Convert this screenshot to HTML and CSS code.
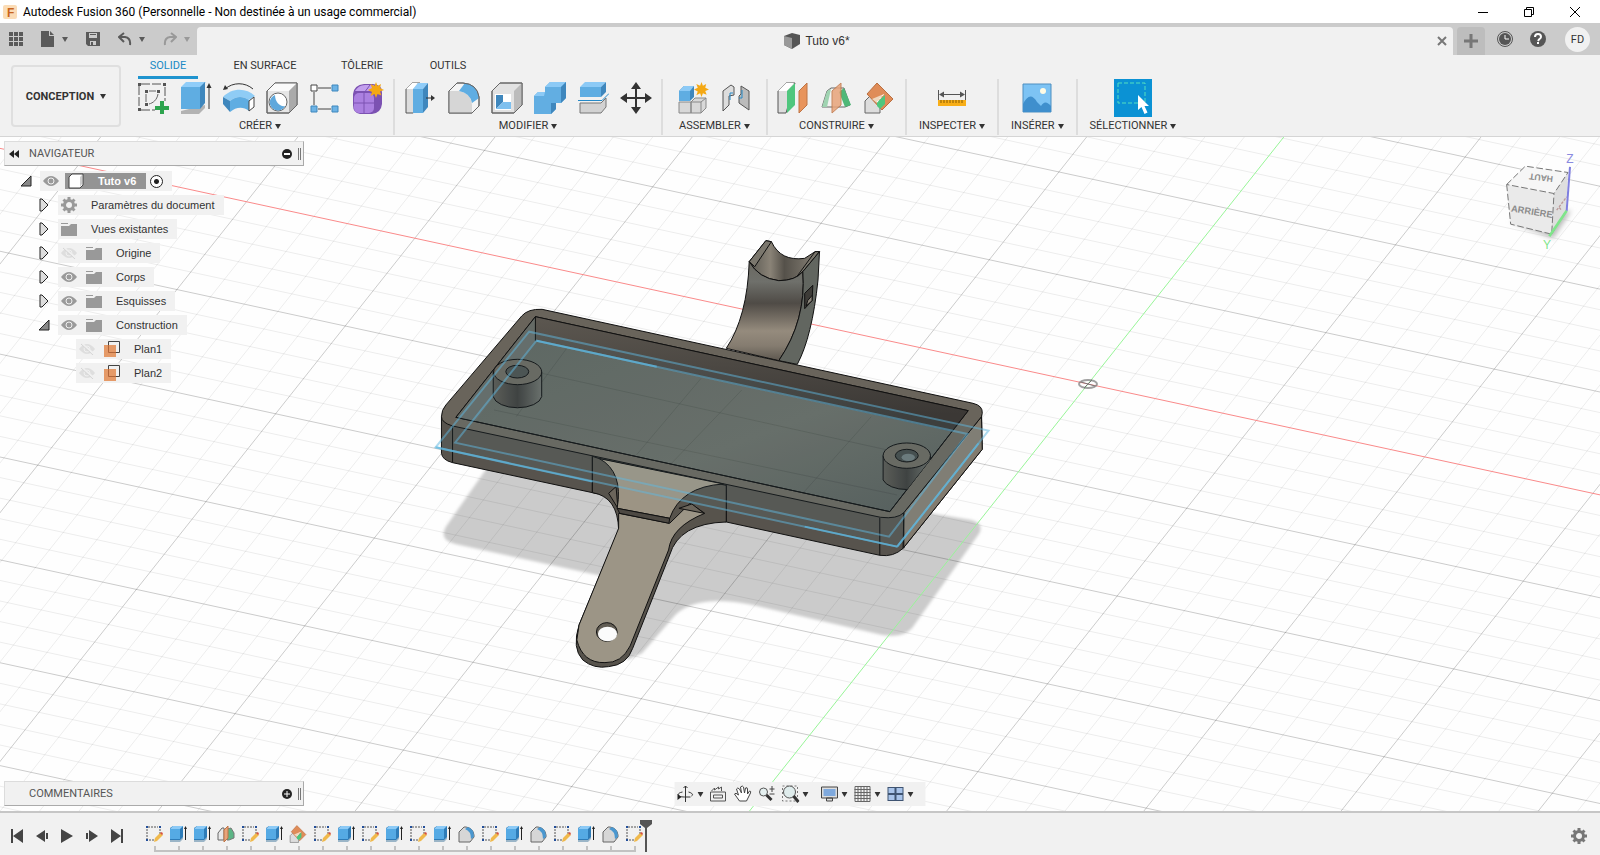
FILE: index.html
```html
<!DOCTYPE html>
<html lang="fr">
<head>
  <meta charset="UTF-8">
  <meta name="viewport" content="width=device-width, initial-scale=1.0">
  <title>Autodesk Fusion 360</title>
  <link rel="stylesheet" href="styles.css">
</head>
<body>
  <!-- icon symbols -->
  <svg class="defs" aria-hidden="true">
    <defs>
      <symbol id="i-caret" viewBox="0 0 6 5"><path d="M0 0h6L3 5z" fill="currentColor"/></symbol>
      <symbol id="i-sketch" viewBox="0 0 32 32">
        <path d="M4 2h22M2 4v22M28 5v14M4 28h14" stroke="#555" fill="none" stroke-dasharray="9 2"/>
        <path d="M1 1h3v3H1zM26 1h3v3h-3zM1 26h3v3H1zM8 8h3v3H8zM20 8h3v3h-3zM8 21h3v3H8z" fill="#555"/>
        <path d="M9 12v8M12 9h7M21 12c-1 6-5 9-9 10" stroke="#666" fill="none"/>
        <path d="M23 19h4v5h5v4h-5v5h-4v-5h-5v-4h5z" fill="#2da44e"/>
      </symbol>
      <symbol id="i-extrude" viewBox="0 0 32 32">
        <path d="M1 29v3h18l6-6v-3z" fill="#b3b3b3"/>
        <path d="M1 5l5-5h20l-6 6H1z" fill="#90cdf9"/>
        <path d="M1 5h19v22H1z" fill="#5fade2"/>
        <path d="M20 5l5-5v21l-5 6z" fill="#3f87bd"/>
        <path d="M29 27V5" stroke="#333"/><path d="M29 1l2.500 5h-5z" fill="#333"/>
      </symbol>
      <symbol id="i-revolve" viewBox="0 0 32 32">
        <path d="M2 7C10 0 22 0 30 7" stroke="#333" fill="none"/><path d="M0 8l2-5 3 4z" fill="#333"/>
        <path d="M0 15C8 6 23 5 32 14l-6 4c-6-4-13-4-19 1z" fill="#8fccf5"/>
        <path d="M0 15l7 4v11l-7-8z" fill="#3f87bd"/><path d="M7 19c6-5 13-5 19-1v11c-6-5-13-4-19 1z" fill="#5fade2"/>
        <path d="M26 19l5-4v10l-5 4z" fill="#fff" stroke="#444"/>
      </symbol>
      <symbol id="i-hole" viewBox="0 0 32 32">
        <path d="M1 9l8-8h22v22l-8 8H1z" fill="#e6e6e6" stroke="#666"/><path d="M1 9l8-8h22l-8 8z" fill="#fafafa"/>
        <path d="M23 9l8-8v22l-8 8z" fill="#aaa"/><path d="M1 9l8-8h22v22l-8 8H1z" fill="none" stroke="#666"/>
        <circle cx="12" cy="20" r="9" fill="#fff" stroke="#666"/><path d="M9 13a8 8 0 1 0 10 11c-5 1-10-4-10-11z" fill="#5fa8dc"/>
      </symbol>
      <symbol id="i-pattern" viewBox="0 0 32 32">
        <path d="M9 6h13M5 10v13M9 27h13" stroke="#444"/><path d="M2 3h6v6H2z" fill="#fff" stroke="#444"/>
        <path d="M23 3h6v6h-6zM2 24h6v6H2zM23 24h6v6h-6z" fill="#6db3e5" stroke="#3f87bd"/>
      </symbol>
      <symbol id="i-form" viewBox="0 0 32 32">
        <path d="M1 12Q2 3 12 2h9q10 1 9 9v11q-1 9-10 10H8q-7-1-7-9z" fill="#7c52b2"/>
        <rect x="2" y="11" width="20" height="20" rx="5" fill="#ab80e0"/><path d="M3 9q4-7 12-6h7l-3 6z" fill="#c3a0ee"/>
        <path d="M12 11v20M2 21h20M24 9v21M12 11l6-8" stroke="#7c52b2" fill="none"/>
        <use href="#i-star" x="16" y="0" width="16" height="16"/>
      </symbol>
      <symbol id="i-star" viewBox="0 0 16 16"><path d="M8 0l1.500 4L13 2l-1 4 4 2-4 1.500 1.500 4L9.500 12 8 16l-1.500-4-4 2L4 10 0 8l4-2-1.500-4 4 2z" fill="#f4a814"/></symbol>
      <symbol id="i-press" viewBox="0 0 32 32">
        <path d="M1 7l6-6h8v24l-7 6H1z" fill="#ddd" stroke="#555"/><path d="M1 7l6-6h6L8 7z" fill="#fff"/>
        <path d="M8 7l5-6h10l-5 6z" fill="#90cdf9"/><path d="M8 7h10v24H8z" fill="#5fade2"/><path d="M18 7l5-6v24l-5 6z" fill="#3f87bd"/>
        <path d="M21 16h6" stroke="#333"/><path d="M30 16l-4 3v-6z" fill="#333"/>
      </symbol>
      <symbol id="i-fillet" viewBox="0 0 32 32">
        <path d="M1 9l8-8h6q14 1 16 14v9l-7 7H1z" fill="#f4f4f4" stroke="#666"/><path d="M1 9h10q12 2 13 14v8H1z" fill="#d6d6d6"/>
        <path d="M11 9l6-8q12 2 14 15l-7 5Q22 11 11 9z" fill="#5fade2"/><path d="M1 9l8-8h6q14 1 16 14v9l-7 7H1z" fill="none" stroke="#666"/>
      </symbol>
      <symbol id="i-shell" viewBox="0 0 32 32">
        <path d="M1 9l8-8h22v22l-8 8H1z" fill="#e2e2e2" stroke="#666"/><path d="M23 9l8-8v22l-8 8z" fill="#bbb"/>
        <path d="M4 12h16v16H4z" fill="#fff"/><path d="M5 13v14l7-7v-7z" fill="#3f87bd"/><path d="M5 27l7-7h8v7z" fill="#7ec0ef"/>
        <path d="M1 9l8-8h22v22l-8 8H1z" fill="none" stroke="#666"/>
      </symbol>
      <symbol id="i-combine" viewBox="0 0 32 32">
        <path d="M0 14l4-4h7V5l5-5h16v16l-5 5h-5v6l-5 5H0z" fill="#62aee2"/><path d="M0 14l4-4h7l-1 4zM11 5l5-5h16l-5 5z" fill="#8ccaf6"/>
        <path d="M27 5l5-5v16l-5 5zM17 24v-3h5v6l-5 5z" fill="#3f87bd"/>
      </symbol>
      <symbol id="i-split" viewBox="0 0 32 32">
        <path d="M3 5l5-5h21l-5 5z" fill="#8ccaf6"/><path d="M3 5h21v10H3z" fill="#5fade2"/><path d="M24 5l5-5v10l-5 5z" fill="#3f87bd"/>
        <path d="M3 21h21l5-5v9l-5 6H3z" fill="#d2d2d2" stroke="#777"/><path d="M1 18.500h24l7-7" stroke="#2489c8" fill="none"/>
      </symbol>
      <symbol id="i-move" viewBox="0 0 32 32"><path d="M16 0l5 7h-4v8h8v-4l7 5-7 5v-4h-8v8h4l-5 7-5-7h4v-8H7v4l-7-5 7-5v4h8V7h-4z" fill="#333"/></symbol>
      <symbol id="i-newcomp" viewBox="0 0 32 32">
        <path d="M2 20h12v11H2zM14 20l4-4h11v10l-5 5H14z" fill="#d8d8d8" stroke="#888"/><path d="M14 20h10v11M24 20l5-4" fill="none" stroke="#888"/>
        <path d="M2 9l5-5h10v11l-4 4H2z" fill="#3f87bd"/><path d="M2 9l5-5h10l-4 5z" fill="#8ccaf6"/><path d="M2 9h11v10H2z" fill="#5fade2"/>
        <use href="#i-star" x="17" y="0" width="15" height="15"/>
      </symbol>
      <symbol id="i-joint" viewBox="0 0 32 32">
        <path d="M3 9l8-6 3 2v8l-5 1v9l-6 6z" fill="#ddd" stroke="#555"/><path d="M29 9l-8-5v8l-2 2v7l10 7z" fill="#bbb" stroke="#555"/>
        <path d="M10 18v-7h3M22 8v8h-3" fill="none" stroke="#2489c8"/>
      </symbol>
      <symbol id="i-offset" viewBox="0 0 32 32">
        <path d="M1 9l8-8h9L9 31H1z" fill="#ddd" stroke="#555"/><path d="M1 9l8-8h8l-7 8z" fill="#fff"/>
        <path d="M10 9l8-8v22l-8 8z" fill="#4fc67d"/><path d="M22 9l8-8v22l-8 8z" fill="#e8945c" stroke="#bf7445"/>
      </symbol>
      <symbol id="i-midplane" viewBox="0 0 32 32">
        <path d="M2 25L7 9l4-3h13l6 17-5 2z" fill="#f2f2f2" stroke="#666"/><path d="M24 6l7 17-6 2-6-15z" fill="#4fb878"/><path d="M2 25L7 9l4-2-4 18z" fill="#9fd3b1"/>
        <path d="M12 9l9-8v22l-9 8z" fill="#e8a47a" opacity=".85" stroke="#bf7445"/>
      </symbol>
      <symbol id="i-angleplane" viewBox="0 0 32 32">
        <path d="M2 19l7-7h8v19H2z" fill="#ddd" stroke="#666"/><path d="M14 1l16 16-11 11L4 12z" fill="#df8c58" stroke="#b96f40"/>
        <path d="M14 20l8-7v9l-5 5-3-3z" fill="#4fc67d"/><path d="M9 17l12-5-7 9z" fill="#f3ead8" opacity=".8"/><path d="M14 20l7-8" stroke="#fff" stroke-dasharray="2 2"/>
      </symbol>
      <symbol id="i-measure" viewBox="0 0 32 32">
        <path d="M2.500 8v10M29.500 8v10M6 12.500h20" stroke="#555"/><path d="M3 12.500l5-3v6zM29 12.500l-5-3v6z" fill="#555"/>
        <path d="M2 18h28v6H2z" fill="#f8ae17"/><path d="M5 18v3M8 18v3M11 18v3M14 18v3M17 18v3M20 18v3M23 18v3M26 18v3" stroke="#875a00"/>
      </symbol>
      <symbol id="i-image" viewBox="0 0 32 32">
        <path d="M2 2h28v28H2z" fill="#7dc3f4" stroke="#4f8fc0"/><circle cx="22" cy="9" r="3" fill="#fffbe5"/>
        <path d="M2 30V22q7-14 14-2l4 4q4-7 10 0v6z" fill="#3f8fcd"/>
      </symbol>
      <symbol id="i-select" viewBox="0 0 38 38">
        <path d="M0 0h38v38H0z" fill="#0b92d4"/><path d="M4 4h27v20H4z" fill="none" stroke="#54e0c0" stroke-dasharray="4 2"/>
        <path d="M24 16v15l3.500-3 3 7 3-1.500-3-6.500H35z" fill="#fff"/>
      </symbol>
      <symbol id="i-eye" viewBox="0 0 16 12">
        <path d="M0 6Q8-4 16 6 8 16 0 6z" fill="#9a9a9a"/><circle cx="8" cy="6" r="3" fill="none" stroke="#f0f0f0"/>
      </symbol>
      <symbol id="i-eye-off" viewBox="0 0 16 12">
        <path d="M0 6Q8-4 16 6 8 16 0 6z" fill="#dedede"/><circle cx="8" cy="6" r="3" fill="none" stroke="#f0f0f0"/><path d="M2 0l13 11" stroke="#f0f0f0" stroke-width="2"/><path d="M2 1l12 11" stroke="#d4d4d4"/>
      </symbol>
      <symbol id="i-folder" viewBox="0 0 16 13"><path d="M0 0h7v1H0zM0 3h8l2-2h6v12H0z" fill="#999"/></symbol>
      <symbol id="i-gear" viewBox="0 0 16 16">
        <circle cx="8" cy="8" r="4.500" fill="none" stroke="currentColor" stroke-width="3"/>
        <path d="M8 0v3M8 13v3M0 8h3M13 8h3M2.500 2.500l2 2M11.500 11.500l2 2M13.500 2.500l-2 2M2.500 13.500l2-2" stroke="currentColor" stroke-width="3"/>
      </symbol>
      <symbol id="i-plane" viewBox="0 0 16 16"><path d="M0 4h12v12H0z" fill="#e59a68"/><path d="M4.500 4V.5h11v11H12" stroke="#444" fill="none"/><path d="M4.500 4v7.500H12" stroke="#b0653a" fill="none"/></symbol>
      <symbol id="i-closed" viewBox="0 0 10 14"><path d="M1 1h2l6 6-6 6H1z" fill="#ddd" stroke="#222"/></symbol>
      <symbol id="i-open" viewBox="0 0 12 12"><path d="M11 1v10H1z" fill="#888" stroke="#222"/></symbol>
      <!-- timeline -->
      <symbol id="t-sketch" viewBox="0 0 18 18">
        <path d="M3 2h10M2 4v10M15 4v6M4 15h6" stroke="#555" stroke-dasharray="2 1" fill="none"/>
        <path d="M1 1h2v2H1zM14 1h2v2h-2zM1 14h2v2H1z" fill="#234f9a"/><path d="M10 13l5-5 3 2-6 6-3 1z" fill="#f0b94c"/><path d="M15 8l2-1 1 2-1 1z" fill="#d8503f"/>
      </symbol>
      <symbol id="t-extrude" viewBox="0 0 18 18">
        <path d="M1 14v3h10l3-3v-3z" fill="#9bb5c7"/><path d="M1 3l3-2h10v11l-3 3H1z" fill="#2e7cb8"/><path d="M1 4l3-3h10l-3 3z" fill="#8ccaf6"/><path d="M1 4h10v10H1z" fill="#55aae4"/>
        <path d="M16.500 15V4" stroke="#222"/><path d="M16.500 1l1.500 3h-3z" fill="#222"/>
      </symbol>
      <symbol id="t-mirror" viewBox="0 0 18 18">
        <path d="M1 15V8l4-5h2v12z" fill="#e8e8e8" stroke="#666"/><path d="M10 4l4-1 3 5v5l-5 2h-2z" fill="#5cb585" stroke="#777"/>
        <path d="M7 5l4-4v12l-4 4z" fill="#e8a47a" stroke="#bf7445"/>
      </symbol>
      <symbol id="t-fillet" viewBox="0 0 18 18">
        <path d="M2 7l5-5h2q7 1 8 8v2l-4 5H2z" fill="#d6d6d6" stroke="#666"/><path d="M8 4l3-2q6 2 6 10l-3 2Q14 6 8 4z" fill="#4a97cf"/>
      </symbol>
    </defs>
  </svg>

  <div class="app">
    <header class="titlebar">
      <svg class="logo" viewBox="0 0 14 14"><rect width="14" height="14" rx="2" fill="#fbdcb6"/><text x="4" y="12" class="logo-f">F</text></svg>
      <h1>Autodesk Fusion 360 (Personnelle - Non destinée à un usage commercial)</h1>
      <button aria-label="Réduire"><svg width="12" height="12" viewBox="0 0 12 12"><path d="M1 6.500h10" stroke="#000"/></svg></button>
      <button aria-label="Restaurer"><svg width="12" height="12" viewBox="0 0 12 12"><path d="M1.500 3.500h7v7h-7zM3.500 3V1.500h7v7H9" fill="none" stroke="#000"/></svg></button>
      <button aria-label="Fermer"><svg width="12" height="12" viewBox="0 0 12 12"><path d="M1 1l10 10M11 1L1 11" stroke="#000"/></svg></button>
    </header>

    <div class="tabbar">
      <div class="quick">
        <button aria-label="Panneau de données"><svg width="14" height="14" viewBox="0 0 14 14"><path d="M0 0h4v4H0zM5 0h4v4H5zM10 0h4v4h-4zM0 5h4v4H0zM5 5h4v4H5zM10 5h4v4h-4zM0 10h4v4H0zM5 10h4v4H5zM10 10h4v4h-4z" fill="#5a5a5a"/></svg></button>
        <button class="has-caret" aria-label="Fichier"><svg width="14" height="16" viewBox="0 0 14 16"><path d="M0 0h8v5h5v11H0zM9 0l4 4H9z" fill="#5a5a5a"/></svg><svg class="caret"><use href="#i-caret"/></svg></button>
        <button aria-label="Enregistrer"><svg width="14" height="14" viewBox="0 0 14 14"><path d="M0 0h14v14H2l-2-2z" fill="#5a5a5a"/><path d="M3 1h8v5H3zM4 9h6v4H4z" fill="#cbcbcb"/><path d="M4 2h6v1H4zM5 10h2v3H5z" fill="#5a5a5a"/></svg></button>
        <button class="has-caret" aria-label="Annuler"><svg width="14" height="14" viewBox="0 0 14 14"><path d="M6 1L1 5l5 5M1 5h6q6 1 5 8" fill="none" stroke="#5a5a5a" stroke-width="2"/></svg><svg class="caret"><use href="#i-caret"/></svg></button>
        <button class="has-caret off" aria-label="Rétablir"><svg width="14" height="14" viewBox="0 0 14 14"><path d="M8 1l5 4-5 5M13 5H7Q1 6 2 13" fill="none" stroke="#999" stroke-width="2"/></svg><svg class="caret"><use href="#i-caret"/></svg></button>
      </div>
      <div class="doc-tab">
        <span class="doc-name"><svg width="16" height="16" viewBox="0 0 16 16"><path d="M0 3l8-3 8 2v9l-8 5-8-4z" fill="#555"/><path d="M0 3l8 2v11l-8-4z" fill="#999"/></svg>Tuto v6*</span>
        <button aria-label="Fermer l'onglet"><svg width="10" height="10" viewBox="0 0 10 10"><path d="M1 1l8 8M9 1L1 9" stroke="#777" stroke-width="2"/></svg></button>
      </div>
      <div class="account">
        <button class="new-tab" aria-label="Nouvel onglet"><svg width="14" height="14" viewBox="0 0 14 14"><path d="M7 0v14M0 7h14" stroke="#777" stroke-width="3"/></svg></button>
        <button aria-label="Historique"><svg width="16" height="16" viewBox="0 0 16 16"><circle cx="8" cy="8" r="7.500" fill="none" stroke="#555"/><circle cx="8" cy="8" r="6" fill="#555"/><path d="M8 4v4h4" stroke="#fff" fill="none"/></svg></button>
        <button aria-label="Aide"><svg width="16" height="16" viewBox="0 0 16 16"><circle cx="8" cy="8" r="8" fill="#555"/><path d="M5 6q0-3 3-3t3 3q0 1-2 2.500L8 10M8 11v2" stroke="#fff" stroke-width="2" fill="none"/></svg></button>
        <button class="avatar">FD</button>
      </div>
    </div>

    <div class="ribbon">
      <button class="workspace">CONCEPTION<svg class="caret"><use href="#i-caret"/></svg></button>
      <div class="ribbon-main">
        <nav class="ribbon-tabs">
          <a href="#" class="current">SOLIDE</a>
          <a href="#">EN SURFACE</a>
          <a href="#">TÔLERIE</a>
          <a href="#">OUTILS</a>
        </nav>
        <div class="groups">
          <div class="group">
            <div class="tools">
              <button aria-label="Créer une esquisse"><svg><use href="#i-sketch"/></svg></button>
              <button aria-label="Extrusion"><svg><use href="#i-extrude"/></svg></button>
              <button aria-label="Révolution"><svg><use href="#i-revolve"/></svg></button>
              <button aria-label="Trou"><svg><use href="#i-hole"/></svg></button>
              <button aria-label="Réseau"><svg><use href="#i-pattern"/></svg></button>
              <button aria-label="Créer une forme"><svg><use href="#i-form"/></svg></button>
            </div>
            <button class="menu">CRÉER<svg class="caret"><use href="#i-caret"/></svg></button>
          </div>
          <div class="group">
            <div class="tools">
              <button aria-label="Appuyer/Tirer"><svg><use href="#i-press"/></svg></button>
              <button aria-label="Congé"><svg><use href="#i-fillet"/></svg></button>
              <button aria-label="Coque"><svg><use href="#i-shell"/></svg></button>
              <button aria-label="Combiner"><svg><use href="#i-combine"/></svg></button>
              <button aria-label="Scinder"><svg><use href="#i-split"/></svg></button>
              <button aria-label="Déplacer"><svg><use href="#i-move"/></svg></button>
            </div>
            <button class="menu">MODIFIER<svg class="caret"><use href="#i-caret"/></svg></button>
          </div>
          <div class="group wide">
            <div class="tools">
              <button aria-label="Nouveau composant"><svg><use href="#i-newcomp"/></svg></button>
              <button aria-label="Liaison"><svg><use href="#i-joint"/></svg></button>
            </div>
            <button class="menu">ASSEMBLER<svg class="caret"><use href="#i-caret"/></svg></button>
          </div>
          <div class="group">
            <div class="tools">
              <button aria-label="Plan de décalage"><svg><use href="#i-offset"/></svg></button>
              <button aria-label="Plan médian"><svg><use href="#i-midplane"/></svg></button>
              <button aria-label="Plan d'angle"><svg><use href="#i-angleplane"/></svg></button>
            </div>
            <button class="menu">CONSTRUIRE<svg class="caret"><use href="#i-caret"/></svg></button>
          </div>
          <div class="group">
            <div class="tools"><button aria-label="Mesurer"><svg><use href="#i-measure"/></svg></button></div>
            <button class="menu">INSPECTER<svg class="caret"><use href="#i-caret"/></svg></button>
          </div>
          <div class="group">
            <div class="tools"><button aria-label="Insérer une image"><svg><use href="#i-image"/></svg></button></div>
            <button class="menu">INSÉRER<svg class="caret"><use href="#i-caret"/></svg></button>
          </div>
          <div class="group">
            <div class="tools"><button class="active" aria-label="Sélectionner"><svg><use href="#i-select"/></svg></button></div>
            <button class="menu">SÉLECTIONNER<svg class="caret"><use href="#i-caret"/></svg></button>
          </div>
        </div>
      </div>
    </div>

    <main class="viewport">
      <svg class="scene" viewBox="0 137 1600 674" preserveAspectRatio="xMidYMid slice">
        <defs>
          <linearGradient id="floor" x1="0" y1="0" x2="1" y2="1"><stop offset="0" stop-color="#5c615b"/><stop offset=".6" stop-color="#686b63"/><stop offset="1" stop-color="#545956"/></linearGradient>
          <linearGradient id="wall" x1="0" y1="0" x2="0.200" y2="1"><stop offset="0" stop-color="#5c5750"/><stop offset="1" stop-color="#3b3835"/></linearGradient>
          <linearGradient id="clip" x1="0" y1="0" x2="0" y2="1"><stop offset="0" stop-color="#6b6961"/><stop offset=".2" stop-color="#6f706b"/><stop offset=".42" stop-color="#4f4b46"/><stop offset=".7" stop-color="#958b7d"/><stop offset=".85" stop-color="#857c70"/><stop offset="1" stop-color="#5d574f"/></linearGradient>
          <linearGradient id="saddle"><stop offset="0" stop-color="#5a5851"/><stop offset=".3" stop-color="#8a8377"/><stop offset=".5" stop-color="#55514a"/><stop offset="1" stop-color="#8b857a"/></linearGradient>
          <linearGradient id="boss"><stop offset="0" stop-color="#5b5851"/><stop offset=".5" stop-color="#3d3c39"/><stop offset="1" stop-color="#6a6c66"/></linearGradient>
          <filter id="soft" x="-10%" y="-10%" width="120%" height="120%"><feGaussianBlur stdDeviation="5"/></filter>
          <clipPath id="opening"><path d="M312 260L1482 542 1270 845 97 562z"/></clipPath>
        </defs>
        <rect y="137" width="1600" height="674" fill="#fefefe"/>
        <g transform="translate(420 230) scale(.3699 .3333)">
          <path d="M190 700L70 890Q50 930 95 942L520 1045 560 1290 600 1270 690 1155Q750 1090 900 1125L1250 1215Q1305 1225 1330 1195L1512 910Q1525 880 1490 870L1380 850 900 760z" fill="#cbcbcb" filter="url(#soft)"/>
        </g>
        <path id="grid-minor" class="grid-minor"/>
        <path id="grid-major" class="grid-major"/>
        <path id="axis-x" class="axis-x"/>
        <path id="axis-y" class="axis-y"/>
        <ellipse cx="1088" cy="384" rx="9" ry="4" class="origin"/><path d="M1081 382l14 4M1092 380l-8 8" class="origin-cross"/>

        <g class="part" transform="translate(420 230) scale(.3699 .3333)">
          <!-- rear clip -->
          <path d="M890 95L935 32 950 35Q975 95 1040 85L1068 65 1080 65 1035 125Q1015 152 970 152 915 145 890 95z" fill="url(#saddle)"/>
          <path d="M890 95L935 32 950 35 905 110zM1068 65L1080 65 1035 125 1020 138z" fill="#7b776d"/>
          <path d="M890 95Q915 145 970 152 1015 152 1035 125 1045 270 970 392L828 355Q885 260 890 95z" fill="url(#clip)"/>
          <path d="M1035 125L1080 65 1076 150Q1060 320 1020 403L970 392Q1045 270 1035 125z" fill="#626660"/>
          <path d="M1040 190L1062 166 1060 212 1040 236z" fill="#3d3b37"/><path d="M1048 212L1060 196 1060 212 1044 228z" fill="#8b857a"/>
          <!-- tray -->
          <path d="M58 560V670Q60 690 88 698L466 788 828 876 1243 976Q1280 982 1306 955L1520 658 1518 550z" fill="#57534d"/>
          <path d="M1308 848L1518 560 1520 658 1306 955z" fill="#827b6f"/>
          <path d="M58 560Q58 540 70 525L275 258Q292 236 330 238L1495 520Q1522 527 1520 550L1518 560 1308 848Q1290 868 1245 862L88 588Q58 578 58 560z" fill="#69645b"/>
          <path d="M312 260L1482 542 1270 845 97 562z" fill="url(#floor)"/>
          <path d="M312 260L1482 542 1440 605 312 333z" fill="url(#wall)" class="plain"/>
          <path d="M312 260V333L150 574 97 562z" fill="#656a65" class="plain"/>
          <path d="M312 333V260L1482 542 1270 845 97 562 312 260" class="edge"/>
          <path d="M88 588V698M1243 864V976M1308 848V955M466 679V788M828 766V876" class="edge"/>
          <g class="seam"><path d="M310 425L1385 690M585 675L760 445M1035 790L1220 560M400 350L260 560M870 480L680 700M200 540L1290 795"/></g>
          <g clip-path="url(#opening)">
            <path d="M198 426V500A66 38 0 0 0 329 500V426z" fill="url(#boss)"/><ellipse cx="264" cy="426" rx="65" ry="38" fill="#69655c"/><ellipse cx="263" cy="425" rx="31" ry="19" fill="#4b4f4c"/>
            <path d="M1252 677V750A66 38 0 0 0 1380 750V677z" fill="url(#boss)"/>
          </g>
          <ellipse cx="1316" cy="677" rx="64" ry="38" fill="#69655c"/><ellipse cx="1316" cy="677" rx="31" ry="19" fill="#454a48"/><ellipse cx="1320" cy="682" rx="18" ry="11" fill="#6c7778" class="plain"/>
          <!-- lower arm -->
          <path d="M466 788Q535 800 537 900L430 1185Q410 1255 440 1290 470 1318 510 1310 560 1305 575 1255L675 975Q700 880 828 876L828 766 800 760 485 686 466 679z" fill="#57534c"/>
          <path d="M537 850L675 880 730 820 770 850Q680 890 672 960L568 1248Q545 1300 500 1298 440 1300 424 1230L430 1185 537 895z" fill="#9c9586"/>
          <path d="M510 790L530 770 535 835zM700 835L735 822 768 850z" fill="#6b655b"/>
          <path d="M485 686Q550 725 533 835L675 865Q705 770 820 762z" fill="#9c9484"/>
          <path d="M533 835L675 865 673 880 540 850z" fill="#4d4943"/>
          <ellipse cx="505" cy="1206" rx="28" ry="28" fill="#615c53"/><ellipse cx="507" cy="1212" rx="26" ry="22" fill="#fbfbfb" class="plain"/>
          <!-- sketch profile -->
          <path d="M42 652L295 305 1537 602 1290 950z" class="glass"/>
          <path d="M42 652L295 305 1537 602 1290 950zM95 638L315 332 1480 612 1268 920z" class="profile"/>
          <path d="M315 332L640 410M42 652L466 755M1290 950L1510 640M1040 890L1290 950" class="profile bright"/>
        </g>
      </svg>

      <section class="panel">
        <header>
          <button aria-label="Réduire le navigateur"><svg width="10" height="8" viewBox="0 0 10 8"><path d="M5 0v8L0 4zM10 0v8L5 4z" fill="#222"/></svg></button>
          <h2>NAVIGATEUR</h2>
          <button aria-label="Masquer"><svg width="10" height="10" viewBox="0 0 10 10"><circle cx="5" cy="5" r="5" fill="#222"/><path d="M2 5h6" stroke="#fff" stroke-width="2"/></svg></button>
          <i class="grip"></i>
        </header>
        <ul class="tree">
          <li class="root">
            <button class="toggle" aria-label="Replier"><svg width="12" height="12"><use href="#i-open"/></svg></button>
            <div class="node">
              <button class="eye" aria-label="Visibilité"><svg width="16" height="12"><use href="#i-eye"/></svg></button>
              <label class="selected" for="active"><svg width="16" height="16" viewBox="0 0 16 16"><path d="M1 4l3-3h11v11l-3 3H1z" fill="#fff" stroke="#444"/><path d="M12 4v10l2-3V2z" fill="#ccc"/></svg>Tuto v6</label>
              <input type="radio" id="active" checked>
            </div>
          </li>
          <li><button class="toggle" aria-label="Déplier"><svg width="10" height="14"><use href="#i-closed"/></svg></button><div class="node"><svg class="gear" width="16" height="16"><use href="#i-gear"/></svg><span>Paramètres du document</span></div></li>
          <li><button class="toggle" aria-label="Déplier"><svg width="10" height="14"><use href="#i-closed"/></svg></button><div class="node"><svg width="16" height="13"><use href="#i-folder"/></svg><span>Vues existantes</span></div></li>
          <li><button class="toggle" aria-label="Déplier"><svg width="10" height="14"><use href="#i-closed"/></svg></button><div class="node"><button class="eye" aria-label="Visibilité"><svg width="16" height="12"><use href="#i-eye-off"/></svg></button><svg width="16" height="13"><use href="#i-folder"/></svg><span>Origine</span></div></li>
          <li><button class="toggle" aria-label="Déplier"><svg width="10" height="14"><use href="#i-closed"/></svg></button><div class="node"><button class="eye" aria-label="Visibilité"><svg width="16" height="12"><use href="#i-eye"/></svg></button><svg width="16" height="13"><use href="#i-folder"/></svg><span>Corps</span></div></li>
          <li><button class="toggle" aria-label="Déplier"><svg width="10" height="14"><use href="#i-closed"/></svg></button><div class="node"><button class="eye" aria-label="Visibilité"><svg width="16" height="12"><use href="#i-eye"/></svg></button><svg width="16" height="13"><use href="#i-folder"/></svg><span>Esquisses</span></div></li>
          <li><button class="toggle" aria-label="Replier"><svg width="12" height="12"><use href="#i-open"/></svg></button><div class="node"><button class="eye" aria-label="Visibilité"><svg width="16" height="12"><use href="#i-eye"/></svg></button><svg width="16" height="13"><use href="#i-folder"/></svg><span>Construction</span></div></li>
          <li class="leaf"><div class="node"><button class="eye" aria-label="Visibilité"><svg width="16" height="12"><use href="#i-eye-off"/></svg></button><svg width="16" height="16"><use href="#i-plane"/></svg><span>Plan1</span></div></li>
          <li class="leaf"><div class="node"><button class="eye" aria-label="Visibilité"><svg width="16" height="12"><use href="#i-eye-off"/></svg></button><svg width="16" height="16"><use href="#i-plane"/></svg><span>Plan2</span></div></li>
        </ul>
      </section>

      <svg class="viewcube" viewBox="300 450 240 320">
        <defs><filter id="cubeshade" x="-20%" y="-20%" width="140%" height="140%"><feGaussianBlur stdDeviation="8"/></filter></defs>
        <path d="M330 665L460 715 515 630 480 640z" fill="#bbb" filter="url(#cubeshade)"/>
        <path d="M320 553L376 498 504 517 462 580z" fill="#f6f6f6"/><path d="M320 553L462 580 455 702 332 672z" fill="#eaeaea"/><path d="M462 580L504 517 498 632 455 702z" fill="#dedede"/>
        <path d="M320 553L376 498 504 517 462 580zM320 553L332 672 455 702 462 580M455 702L498 632" fill="none" stroke="#777" stroke-width="3" stroke-dasharray="20 8"/>
        <path d="M470 630L500 590M478 622l6 8" stroke="#b99" stroke-width="4" stroke-dasharray="8 4"/>
        <path d="M510 500L500 632" stroke="#7f7fe0" stroke-width="6"/><path d="M500 632L448 708" stroke="#7fe58a" stroke-width="8"/>
        <text x="499" y="490" class="cube-axis z">Z</text><text x="429" y="747" class="cube-axis y">Y</text>
        <text class="cube-face" transform="translate(332 634) rotate(9)">ARRIÈRE</text>
        <text class="cube-face top" transform="translate(460 528) rotate(187)">HAUT</text>
      </svg>

      <section class="panel comments">
        <header>
          <h2>COMMENTAIRES</h2>
          <button aria-label="Ajouter"><svg width="10" height="10" viewBox="0 0 10 10"><circle cx="5" cy="5" r="5" fill="#222"/><path d="M2 5h6M5 2v6" stroke="#fff"/></svg></button>
          <i class="grip"></i>
        </header>
      </section>

      <div class="navbar">
        <button class="has-caret" aria-label="Orbite"><svg width="18" height="18" viewBox="0 0 18 18"><path d="M9 1v16M7 3l2-2 2 2M6 7C0 8 0 12 8 12h6M12 7c4 1 5 3 3 4" fill="none" stroke="#333"/><path d="M1 9v6l4-3z" fill="#222"/></svg><svg class="caret"><use href="#i-caret"/></svg></button>
        <button aria-label="Regarder"><svg width="18" height="18" viewBox="0 0 18 18"><path d="M1 7h15v9H1zM4 10h9v3H4zM2 6l3-3v2l4-3v2l3-2v4" fill="none" stroke="#555"/></svg></button>
        <button aria-label="Panoramique"><svg width="18" height="18" viewBox="0 0 18 18"><path d="M6 16L1 9q1-2 4 1L3 4q1-2 3 0l2 4-1-6q2-2 3 0l1 6 1-5q2-1 2 1v5l2-3q2 0 1 2l-4 8z" fill="#fff" stroke="#444"/></svg></button>
        <button aria-label="Zoom"><svg width="18" height="18" viewBox="0 0 18 18"><circle cx="6" cy="7" r="4" fill="#e5f0f0" stroke="#555"/><path d="M9 10l5 5" stroke="#333" stroke-width="3"/><path d="M12 4h5M14.500 1v6M12 9h5" stroke="#444"/></svg></button>
        <button class="has-caret" aria-label="Ajuster"><svg width="18" height="18" viewBox="0 0 18 18"><path d="M1 1h15v15H1z" fill="none" stroke="#777" stroke-dasharray="2 2"/><circle cx="8" cy="7" r="6" fill="#dfecec" stroke="#555"/><path d="M12 11l5 6" stroke="#333" stroke-width="3"/></svg><svg class="caret"><use href="#i-caret"/></svg></button>
        <button class="has-caret split" aria-label="Affichage"><svg width="18" height="18" viewBox="0 0 18 18"><path d="M1 2h16v11H1zM6 13h6v3H6z" fill="#ddd" stroke="#444"/><path d="M3 4h12v7H3z" fill="#7fa9dd"/></svg><svg class="caret"><use href="#i-caret"/></svg></button>
        <button class="has-caret" aria-label="Grille"><svg width="18" height="18" viewBox="0 0 18 18"><path d="M1.500 1.500h15v15h-15zM4.500 1v16M7.500 1v16M10.500 1v16M13.500 1v16M1 4.500h16M1 7.500h16M1 10.500h16M1 13.500h16" fill="none" stroke="#666"/></svg><svg class="caret"><use href="#i-caret"/></svg></button>
        <button class="has-caret" aria-label="Fenêtres"><svg width="18" height="18" viewBox="0 0 18 18"><path d="M1 2h16v14H1z" fill="#3f5472"/><path d="M2 3h6v5H2zM10 3h6v5h-6zM2 10h6v5H2zM10 10h6v5h-6z" fill="#a9c4ea"/></svg><svg class="caret"><use href="#i-caret"/></svg></button>
      </div>
    </main>

    <footer class="timeline">
      <div class="player">
        <button aria-label="Début"><svg viewBox="0 0 14 14"><path d="M1 0h2v14H1zM13 0v14L3 7z" fill="#444"/></svg></button>
        <button aria-label="Précédent"><svg viewBox="0 0 14 14"><path d="M10 1v12L1 7zM11 4h2v6h-2z" fill="#444"/></svg></button>
        <button aria-label="Lecture"><svg viewBox="0 0 14 14"><path d="M1 0v14l12-7z" fill="#444"/></svg></button>
        <button aria-label="Suivant"><svg viewBox="0 0 14 14"><path d="M4 1v12l9-6zM1 4h2v6H1z" fill="#444"/></svg></button>
        <button aria-label="Fin"><svg viewBox="0 0 14 14"><path d="M1 0v14l10-7zM11 0h2v14h-2z" fill="#444"/></svg></button>
      </div>
      <ol class="steps" id="steps"></ol>
      <svg class="marker" width="12" height="32" viewBox="0 0 12 32"><path d="M0 0h12v4L7 8v24H5V8L0 4z" fill="#555"/></svg>
      <button class="settings" aria-label="Paramètres"><svg width="16" height="16"><use href="#i-gear"/></svg></button>
    </footer>
  </div>
  <script>
  // ground grid: two directions, one heavy line every five cells
  var ox = 1088, oy = 384;
  var a = [33.66, 7.29];
  var b = [13.92, -17.56];
  var minor = "", major = "";
  function line(n, step, dir) {
      var x = ox + n * step[0], y = oy + n * step[1];
      return "M" + (x - dir[0] * 100) + " " + (y - dir[1] * 100) + "L" + (x + dir[0] * 100) + " " + (y + dir[1] * 100);
  }
  for (var i = -60; i <= 60; i++) {
      if (i === 0) continue;
      if (i % 5 === 0) {
          major += line(i, a, b) + line(i, b, a);
      } else {
          minor += line(i, a, b) + line(i, b, a);
      }
  }
  document.getElementById("grid-minor").setAttribute("d", minor);
  document.getElementById("grid-major").setAttribute("d", major);
  document.getElementById("axis-x").setAttribute("d", line(0, a, a));
  document.getElementById("axis-y").setAttribute("d", line(0, b, b));

  // timeline steps
  var icons = {
      s: ["t-sketch", "Esquisse"],
      e: ["t-extrude", "Extrusion"],
      f: ["t-fillet", "Congé"],
      m: ["t-mirror", "Plan médian"],
      p: ["i-angleplane", "Plan d'angle"]
  };
  var html = "";
  "seemsepsesesefsefsefs".split("").forEach(function (k) {
      html += '<li><button aria-label="' + icons[k][1] + '"><svg width="18" height="18"><use href="#' + icons[k][0] + '"/></svg></button></li>';
  });
  document.getElementById("steps").innerHTML = html;
  </script>
</body>
</html>
```
FILE: styles.css
```css
* {
  margin: 0;
  padding: 0;
  box-sizing: border-box;
}
body {
  font-family: "Liberation Sans", Arial, sans-serif;
  font-size: 12px;
  color: #333;
}
button {
  border: 0;
  background: none;
  font: inherit;
  color: inherit;
  display: flex;
  align-items: center;
  justify-content: center;
}
ul, ol {
  list-style: none;
}
svg {
  display: block;
  flex: none;
}
.defs {
  position: absolute;
  width: 0;
  height: 0;
}
.app {
  display: flex;
  flex-direction: column;
  height: 100vh;
  overflow: hidden;
}
.caret {
  width: 6px;
  height: 5px;
}
/* title bar */
.titlebar {
  display: flex;
  align-items: center;
  height: 23px;
  padding: 0 2px 0 3px;
  background: #fff;
}
.logo {
  width: 14px;
  height: 14px;
}
.logo-f {
  font: bold 12px "Liberation Sans", sans-serif;
  fill: #c8641e;
}
.titlebar h1 {
  flex: 1;
  padding-left: 6px;
  font: 12px/20px Roboto, "Noto Sans", sans-serif;
  color: #000;
}
.titlebar button {
  width: 46px;
}
/* tab bar */
.tabbar {
  display: flex;
  align-items: flex-end;
  height: 32px;
  background: #cbcbcb;
}
.quick {
  display: flex;
  align-items: center;
  gap: 18px;
  width: 197px;
  height: 32px;
  padding-left: 9px;
}
.has-caret {
  gap: 7px;
}
.quick .caret {
  color: #5a5a5a;
}
.quick .off .caret {
  color: #999;
}
.doc-tab {
  flex: 1;
  display: flex;
  align-items: center;
  height: 28px;
  padding-right: 6px;
  border-radius: 4px 4px 0 0;
  background: #f1f1f1;
}
.doc-name {
  flex: 1;
  display: flex;
  align-items: center;
  justify-content: center;
  gap: 5px;
  font-size: 12px;
}
.account {
  display: flex;
  align-items: center;
  gap: 17px;
  height: 32px;
  padding: 0 10px 0 4px;
}
.new-tab {
  align-self: flex-end;
  width: 28px;
  height: 28px;
  margin-right: -5px;
  border-radius: 4px 4px 0 0;
  background: #bdbdbd;
}
.avatar {
  width: 25px;
  height: 25px;
  margin-left: 2px;
  border-radius: 50%;
  background: #f1f1f1;
  font: 11px/25px Roboto, sans-serif;
}
/* ribbon */
.ribbon {
  display: flex;
  height: 82px;
  padding-left: 11px;
  border-bottom: 1px solid #d5d5d5;
  background: #f1f1f1;
  font-family: Roboto, sans-serif;
  font-size: 11px;
}
.workspace {
  gap: 6px;
  width: 110px;
  height: 62px;
  margin: 10px 6px 0 0;
  border: 2px solid #dfdfdf;
  border-radius: 4px;
  font-weight: bold;
}
.ribbon-main {
  flex: 1;
}
.ribbon-tabs {
  display: flex;
  gap: 26px;
  padding-left: 11px;
}
.ribbon-tabs a {
  min-width: 60px;
  height: 24px;
  line-height: 22px;
  text-align: center;
  color: #333;
  text-decoration: none;
}
.ribbon-tabs a:nth-child(2) {
  min-width: 82px;
}
.ribbon-tabs .current {
  color: #1889c4;
  border-bottom: 3px solid #1f94cf;
}
.groups {
  display: flex;
  height: 56px;
}
.group {
  display: flex;
  flex-direction: column;
  align-items: center;
  padding: 0 4px;
  border-right: 2px solid #ddd;
}
.group.wide {
  padding: 0 8px;
}
.group:last-child {
  border-right: 0;
}
.tools {
  display: flex;
  align-items: center;
  height: 40px;
}
.tools button {
  width: 43px;
}
.tools svg {
  width: 32px;
  height: 32px;
}
.tools .active svg {
  width: 38px;
  height: 38px;
}
.menu {
  gap: 3px;
  padding: 0 8px;
  line-height: 18px;
}
/* viewport */
.viewport {
  position: relative;
  flex: 1;
  min-height: 0;
  display: flex;
  flex-direction: column;
  justify-content: space-between;
  padding: 4px 4px 5px;
}
.scene {
  position: absolute;
  left: 0;
  top: 0;
  width: 100%;
  height: 100%;
}
.grid-minor, .grid-major, .axis-x, .axis-y {
  fill: none;
  stroke: #000;
  stroke-opacity: .07;
}
.grid-major {
  stroke-opacity: .2;
}
.axis-x {
  stroke: #fa8a8a;
  stroke-opacity: 1;
}
.axis-y {
  stroke: #98f598;
  stroke-opacity: 1;
}
.origin {
  fill: none;
  stroke: #777;
  stroke-opacity: .7;
  stroke-width: 2;
}
.origin-cross {
  stroke: #777;
}
.part path, .part ellipse {
  stroke: #111;
  vector-effect: non-scaling-stroke;
}
.part .plain {
  stroke: none;
}
.part .edge {
  fill: none;
}
.part .seam path {
  fill: none;
  stroke-opacity: .12;
}
.part .glass {
  fill: #5fb4d8;
  fill-opacity: .06;
  stroke: none;
}
.part .profile {
  fill: none;
  stroke: #5fb8e0;
  stroke-opacity: .5;
  stroke-width: 2;
}
.part .bright {
  stroke-opacity: .7;
}
.panel {
  position: relative;
  width: 300px;
}
.panel header {
  display: flex;
  align-items: center;
  height: 25px;
  padding: 0 2px 0 4px;
  border: 1px solid #dcdcdc;
  border-right-color: #aaa;
  border-bottom-color: #aaa;
  background: #f1f1f1;
}
.panel h2 {
  flex: 1;
  padding-left: 10px;
  font: 11px/22px Roboto, sans-serif;
  color: #555;
}
.comments h2 {
  padding-left: 20px;
}
.grip {
  width: 3px;
  height: 12px;
  margin-left: 6px;
  border: solid #777;
  border-width: 0 1px;
}
/* browser tree */
.tree {
  padding-top: 3px;
  font-size: 11px;
}
.tree li {
  display: flex;
  align-items: center;
  height: 24px;
  padding-left: 34px;
}
.tree .root {
  padding-left: 16px;
}
.tree .leaf {
  padding-left: 72px;
}
.toggle {
  width: 12px;
  margin-right: 8px;
}
.node {
  display: flex;
  align-items: center;
  height: 20px;
  padding: 0 9px 0 3px;
  background: #f1f1f1;
}
.node .eye {
  margin-right: 9px;
}
.node span {
  padding-left: 14px;
}
.gear {
  color: #999;
}
.root .eye {
  margin-right: 6px;
}
.selected {
  display: flex;
  align-items: center;
  gap: 14px;
  height: 16px;
  padding: 0 10px 0 3px;
  background: #949494;
  color: #fff;
  font-weight: bold;
}
.root input {
  appearance: none;
  width: 13px;
  height: 13px;
  margin-left: 4px;
  border: 1px solid #222;
  border-radius: 50%;
  background: radial-gradient(circle, #222 0 2px, #fff 3px);
}
.viewcube {
  position: absolute;
  right: 20px;
  top: 13px;
  width: 80px;
  height: 107px;
}
.cube-axis {
  font: 36px "Liberation Sans", sans-serif;
}
.cube-axis.z {
  fill: #8a8ae0;
}
.cube-axis.y {
  fill: #7fe58a;
}
.cube-face {
  font: bold 28px "Liberation Sans", sans-serif;
  fill: #8c8c8c;
}
.cube-face.top {
  font-size: 26px;
}
.navbar {
  position: absolute;
  left: 50%;
  bottom: 5px;
  transform: translateX(-50%);
  display: flex;
  align-items: center;
  gap: 6px;
  height: 24px;
  padding: 0 12px 0 2px;
  background: #f1f1f1;
}
.navbar .has-caret {
  gap: 3px;
}
.navbar .split {
  margin-left: 6px;
}
.navbar .caret {
  color: #333;
}
/* timeline */
.timeline {
  display: flex;
  align-items: center;
  height: 44px;
  padding: 4px 13px 0 10px;
  border-top: 2px solid #c6c6c6;
  background: #f1f1f1;
}
.player {
  display: flex;
  gap: 11px;
  width: 132px;
}
.player svg {
  width: 14px;
  height: 14px;
}
.steps {
  display: flex;
}
.steps li {
  position: relative;
  width: 24px;
  height: 32px;
  padding: 5px 3px 0;
}
.steps li::before, .steps li::after {
  content: "";
  position: absolute;
  left: 12px;
  bottom: 0;
  width: 2px;
  height: 6px;
  background: #c2c2c2;
}
.steps li:not(:last-child)::before {
  width: 24px;
  height: 2px;
}
.marker {
  position: relative;
  margin-left: -6px;
}
.settings {
  margin-left: auto;
  color: #777;
}
```
